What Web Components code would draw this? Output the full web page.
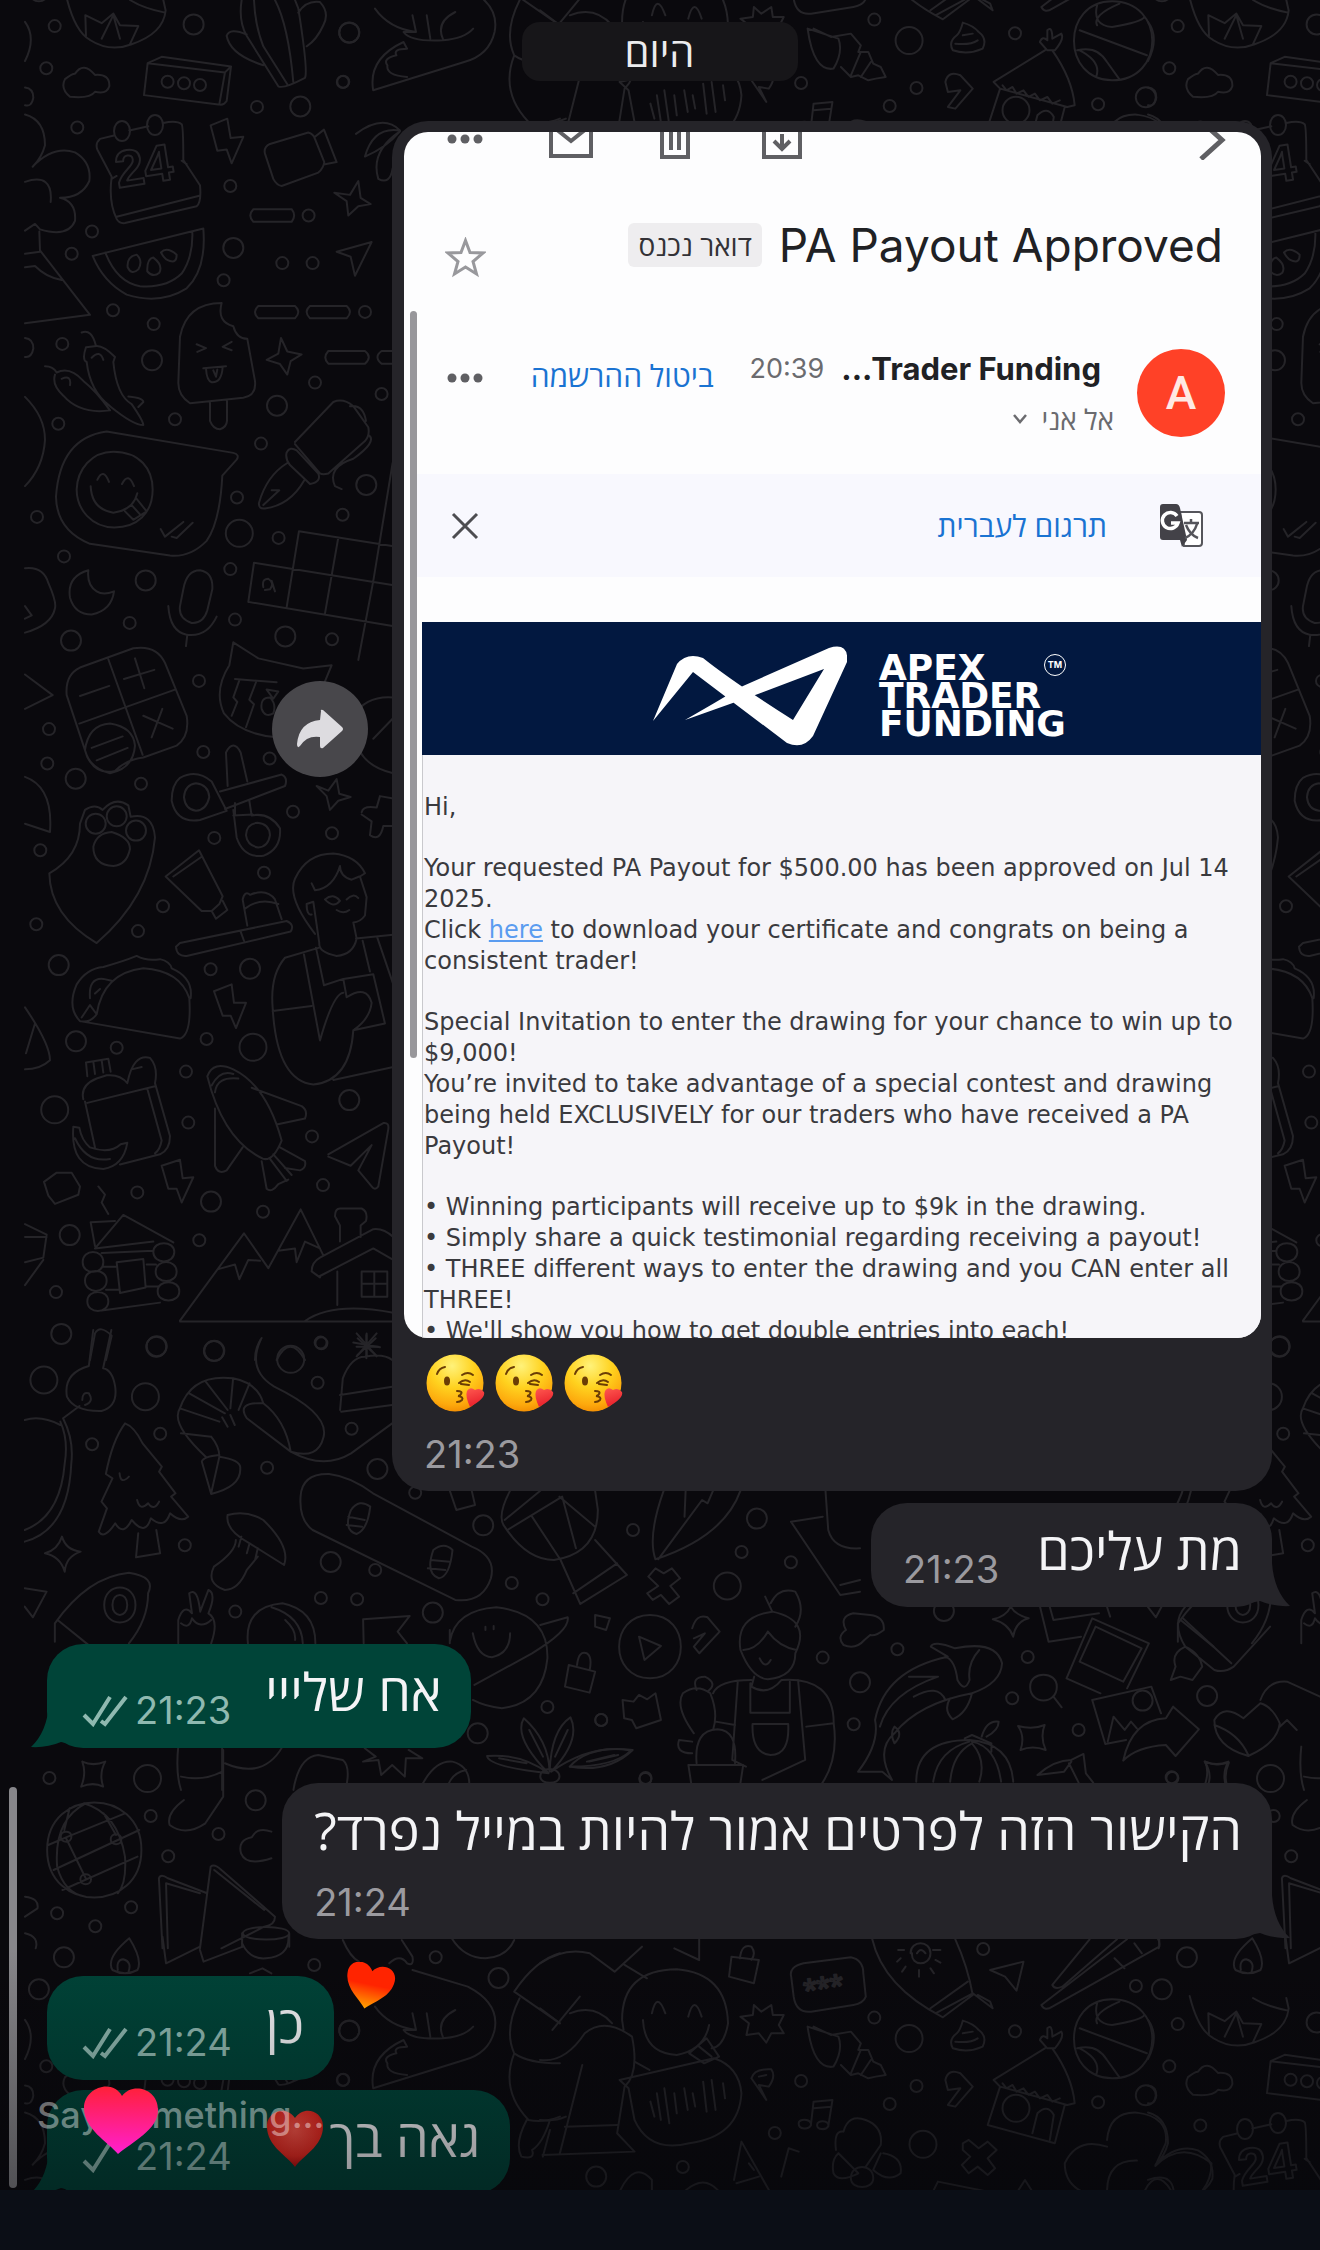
<!DOCTYPE html>
<html lang="he">
<head>
<meta charset="utf-8">
<meta name="viewport" content="width=device-width, initial-scale=1">
<title>Chat</title>
<style>
html, body { margin: 0; height: 100%; background: #0a090d; }
body { font-family: "Open Sans", "Liberation Sans", sans-serif; color: #f4f4f6; }
</style>
</head>
<body>
<chat-screen>
  <date-pill>היום</date-pill>
  <chat-bubble side="in" kind="photo" time="21:23">
    <mail-card slot="media"></mail-card>
    <kiss-emoji></kiss-emoji><kiss-emoji></kiss-emoji><kiss-emoji></kiss-emoji>
  </chat-bubble>
  <chat-bubble side="in" tail time="21:23">מת עליכם</chat-bubble>
  <chat-bubble side="out" tail gap="wide" ticks="2" time="21:23">אח שלייי</chat-bubble>
  <chat-bubble side="in" kind="long" tail gap="wide" time="21:24">הקישור הזה לפרטים אמור להיות במייל נפרד?</chat-bubble>
  <chat-bubble side="out" gap="wide" ticks="2" time="21:24">כן</chat-bubble>
  <chat-bubble side="out" tail ticks="1" time="21:24">גאה בך<heart-emoji></heart-emoji></chat-bubble>
  <live-overlay slot="overlay"></live-overlay>
</chat-screen>

<script>
const define = (name, html, setup) => {
  const tpl = document.createElement('template');
  tpl.innerHTML = html;
  customElements.define(name, class extends HTMLElement {
    constructor() {
      super();
      this.attachShadow({ mode: 'open' }).append(tpl.content.cloneNode(true));
    }
    connectedCallback() { if (setup) setup(this, this.shadowRoot); }
  });
};

/* Wallpaper doodles. Each sheet has its own origin and scale; s/m/l are dots, d is line work. */
const sheets = [
  { x: 0, y: 0, sx: .3333, sy: .4209,
    s: [[164,62],[139,162],[1030,194],[771,254],[232,303],[691,442],[926,512],[276,550],[215,603],[847,625],[938,625],[671,666],[339,737],[461,770],[1095,741],[187,817],[945,909],[1145,936],[175,1007],[525,996],[783,1054],[711,1182],[111,1228],[1028,1223],[836,1278],[192,1322],[691,1352],[389,1480],[705,1472],[996,1519],[503,194],[552,198],[600,202]],
    m: [[581,58],[1048,77],[901,253],[700,589],[456,856],[831,964],[1099,1152],[437,1379],[856,1512],[213,1522]],
    l: [[718,1267]],
    d: `M200-5Q225 75 270 95Q330 125 395 105Q490 80 497 25L490 0M495 30Q430 20 390 0M258 85L256 36L305 55L340 32L360 60L415 62L390 105M305 92L340 36L360 92
    M210 230Q180 210 195 188Q215 175 225 175Q250 145 285 178Q330 175 328 205Q320 225 285 218Q270 235 210 230Z
    M443 150L485 135L693 158L680 240Q670 252 655 248L432 226ZM443 150L675 172L658 248M675 172L693 158
    M725 0Q715 50 740 85L835 205Q850 212 915 185Q925 170 895 20L885 0M762 0Q765 60 790 110L862 200M825 0Q865 60 880 195M740 82Q690 65 680 85Q690 130 790 155M895 30Q920 0 960 5Q990 30 970 60Q950 95 920 110
    M342 322L300 330Q285 340 292 355L335 420Q325 480 350 520Q358 532 375 530L590 490Q605 480 600 440L550 380Q550 300 545 295Q530 285 490 292M388 310L445 300M350 515L598 465M335 425L350 418M545 382L560 390
    M632 298L682 282L692 328L730 325L695 388L680 355L652 358Z
    M795 365Q790 350 810 342L925 315Q940 318 945 330L973 385Q970 400 955 410L845 442Q830 440 820 425ZM945 325L972 308L1010 385L975 390
    M760 497H875Q890 512 875 527H760Q742 512 760 497ZM775 727H885Q905 741 885 756H775Q755 741 775 727ZM930 727H1040Q1060 741 1040 756H930Q910 741 930 727ZM985 834H1095Q1118 848 1095 864H985Q967 850 985 834ZM1200 834H1145Q1120 848 1145 864H1200
    M1003 458L1050 463L1075 430L1082 470L1112 485L1075 490L1045 512L1040 478ZM800 855L835 840L843 803L862 835L905 842L872 858L862 890L840 865Z
    M1010 598L1115 575L1065 655L1052 610Z
    M1068 318Q1150 270 1200 310Q1120 300 1095 372Q1160 350 1200 312Q1110 360 1135 425Q1170 440 1178 400
    M278 608L610 543Q620 640 560 685Q480 725 380 700Q310 670 278 608ZM316 600Q350 670 420 680Q500 685 545 650Q580 610 577 550M383 635Q380 610 410 605Q430 620 415 640Q395 655 383 635M442 645Q440 615 460 612Q490 630 478 648Q460 660 442 645M483 600Q500 585 530 605Q530 625 510 620Q495 618 483 600
    M75 272Q135 285 135 345Q125 375 98 396Q160 345 225 362Q275 385 268 430Q245 470 180 470Q230 480 225 525Q205 565 120 545L105 532L75 548M75 432Q160 410 152 480M118 550L120 595L270 748L75 768M75 603L120 598M75 635L105 632Q140 660 185 665
    M75 208Q100 210 100 232Q95 255 75 250M75 803Q100 805 100 828Q95 850 75 848M75 52Q110 90 75 145M75 943Q135 990 135 1045Q130 1110 75 1155
    M245 790Q275 780 288 822Q310 820 345 848L340 860Q350 940 395 960Q430 1000 430 1010Q400 1010 330 965Q270 930 260 860Q245 855 258 825L290 822M135 870Q160 870 170 885Q210 870 250 905Q290 930 330 975Q240 985 190 940Q155 915 165 890M185 900Q215 890 210 915M275 850Q300 830 310 855M385 942Q430 945 430 955L415 967
    M540 800Q560 720 665 720Q650 765 700 775Q710 805 742 805L765 905Q770 940 730 945L570 958Q535 940 535 910ZM590 818L618 827L592 836M695 812L668 824L695 832M610 875L678 870M618 875Q620 905 635 908Q665 910 668 872M640 880L648 895L652 878M630 955V1000Q640 1020 660 1020Q680 1015 681 1000V952
    M320 1025L700 1076Q720 1080 710 1092L667 1130Q660 1240 620 1285Q570 1325 510 1320L270 1292Q170 1260 168 1180Q180 1040 320 1025ZM340 1073C420 1073 458 1115 458 1163C458 1220 410 1253 343 1253C275 1253 230 1210 230 1163C232 1115 275 1073 340 1073ZM292 1140Q310 1110 327 1145M366 1150Q385 1120 402 1155M272 1155Q275 1210 340 1218Q400 1212 412 1172M375 1215L400 1235L440 1215L410 1185M395 1200L420 1222M482 1257L495 1275L550 1240M515 1275L530 1278L578 1242
    M885 1050L1000 955Q1030 945 1060 965L1105 1015Q1110 1035 1095 1048L985 1125Q960 1130 955 1120L885 1055M860 1075Q870 1060 890 1070L955 1125Q965 1145 930 1150L870 1105Q855 1090 860 1075M862 1100Q800 1130 777 1195Q775 1210 795 1208Q870 1200 912 1142M790 1200L838 1165L815 1165M1050 965Q1090 960 1098 1000M1108 1035Q1130 1050 1060 1090Q980 1110 1005 1155L1025 1162
    M265 1355Q200 1370 210 1420Q225 1460 275 1460Q335 1450 342 1405Q310 1415 290 1405Q260 1390 265 1355Z
    M550 1400Q560 1355 600 1355Q640 1360 637 1400L622 1450Q610 1482 575 1480Q535 1470 540 1440ZM505 1440Q510 1500 560 1508Q620 1515 650 1465M562 1508L558 1535
    M745 1430L762 1337L1200 1393M745 1430L1200 1490M860 1443L897 1262L1200 1300M975 1458L1015 1277M1075 1568L1120 1380L1178 1100M790 1395Q785 1375 805 1375Q825 1385 810 1400L795 1402M815 1380L825 1405
    M75 1350Q130 1345 145 1385Q170 1430 165 1445Q155 1485 75 1503M75 1440L95 1462L75 1470` },
  { x: 0, y: 640, sx: .3333, sy: .4592,
    s: [[597,89],[147,194],[142,269],[610,244],[809,258],[423,313],[879,374],[996,421],[121,458],[643,431],[792,507],[489,580],[109,619],[414,634],[632,717],[620,869],[350,888],[558,940],[565,1051],[936,1081],[412,1203],[969,1187],[789,1245],[598,1307],[168,1420],[962,1530]],
    m: [[227,302],[176,708],[750,716],[228,874],[1048,1002],[633,1223],[209,1296],[184,1511],[470,1538],[643,1548],[287,400],[350,384],[408,415]],
    l: [[164,1023],[759,887]],
    d: `M240 60L400 18Q470 10 495 50L560 165Q570 210 530 230L430 256Q380 260 345 285Q290 295 262 255L200 120Q195 75 240 60ZM325 42L428 250M238 182L525 108M240 122L328 100M372 85L463 65M405 40L433 105M430 165L518 193M487 150L455 212M255 240Q265 185 330 182Q400 190 405 230Q400 280 330 290Q270 280 255 240M275 235L368 210M290 262L383 235
    M700 5L775 40L910 62L995 55L975 90M700 5L688 55Q640 110 672 160Q720 205 830 212M705 85L830 92M718 88L700 125L712 135L695 165M768 92L748 130L762 140L738 190M785 150Q780 125 810 125Q830 140 820 160Q795 170 785 150M800 108L835 112L820 128Z
    M540 300Q590 280 635 308L680 372L600 392Q530 400 515 350Q515 315 540 300M552 342Q555 315 588 312Q625 315 628 342Q620 370 588 372Q555 368 552 342M660 330L845 293Q865 300 855 318L675 368M683 318L678 245Q700 215 722 245L742 308M700 370L710 430Q730 475 790 470Q845 455 840 410Q810 375 755 382L748 350M738 425Q740 400 772 398Q808 400 810 425Q805 450 775 452Q742 448 738 425M700 382L758 380M705 355V380
    M255 370Q285 355 308 370Q345 340 385 360L392 385Q460 375 465 430Q450 560 290 660Q150 600 148 508Q240 470 240 400ZM280 450Q290 420 335 418Q390 430 390 455Q380 490 340 492Q280 490 280 450
    M497 515L597 458L668 558L658 575L635 590L605 590L497 515M520 515L605 472M635 590L648 607L682 588L668 568
    M540 660L860 612Q885 620 872 635L560 688Q530 690 528 668ZM722 635L732 655M742 622L728 565Q735 545 750 555Q800 540 825 565L845 608M735 585Q780 560 835 575
    M945 640Q860 560 885 520Q920 465 1000 465Q1070 470 1095 508L1080 515L1100 560L1095 600Q1080 615 1060 615L1070 650Q1060 685 1010 688Q955 680 958 660L940 570M935 530L945 545Q1000 540 1020 492Q1020 515 1055 522L1078 515M975 565Q1000 550 1020 568Q1000 585 975 565M1040 565Q1060 550 1075 562M920 575L940 570M920 575Q920 600 935 598M1010 588Q1030 598 1048 588
    M958 670L855 692Q810 730 818 800Q830 960 940 968Q1050 960 1060 850L1155 835L1120 728L1030 738L972 752L948 670M912 685L960 872Q1000 770 1030 768M818 808L935 797M1068 650L1180 642M1088 655L1110 722M1132 648L1180 750M1030 738L1040 778Q1100 750 1115 790Q1110 825 1060 850M1000 958L1180 930
    M240 830Q200 800 230 750Q260 715 310 712Q370 700 410 688Q440 700 480 695Q510 700 515 715Q580 735 572 780M240 830L540 868Q575 860 568 780Q540 720 430 715Q310 725 290 815Q270 835 240 830M270 780Q265 735 310 738L335 742M285 770L300 760M245 822L270 795L290 815
    M642 765L695 750L702 790L738 790L708 845L692 818L668 818ZM485 1145L540 1132L548 1172L580 1170L545 1225L530 1195L505 1195Z
    M250 1000Q240 970 290 955L320 948Q360 945 382 965Q400 900 450 910Q475 930 465 965L510 1080Q510 1110 480 1120L360 1142M262 1008L465 972M255 1005L285 1105M443 980L485 1090Q480 1110 465 1118M262 950L258 920L325 912L332 940M280 918L285 945M305 915L310 942M395 935L425 930M220 1060Q210 1150 310 1152Q370 1145 382 1095L362 1098Q330 1120 270 1105Q245 1090 238 1062ZM225 1085Q260 1140 330 1130
    M622 950Q640 915 700 935Q800 970 845 1090Q820 1135 790 1130Q670 1090 622 950M645 985Q650 950 715 955M635 970Q660 935 700 945M755 975L905 1015Q925 1025 915 1042L830 1055M645 1020V1145Q655 1165 680 1155L728 1105M785 1135L800 1195Q815 1205 835 1185L865 1175M840 1105L915 1135Q920 1150 900 1155L855 1150M810 1130L860 1178M820 1120L875 1165
    M985 1120L1150 1052Q1168 1050 1165 1065L1135 1190Q1125 1200 1115 1190L1075 1155L1115 1100L1052 1145L985 1125
    M132 1180L170 1160L215 1160L240 1190L235 1208L165 1228L145 1210ZM295 1190L315 1208L305 1225L325 1250
    M285 1325L370 1252L520 1312M285 1325L460 1310M285 1320L272 1268L345 1265M305 1335L460 1330M305 1460L480 1443M310 1365H350M440 1360H468M318 1415H355M440 1408H475M350 1355L430 1348L437 1410L360 1422ZM248 1355C248 1325 310 1325 310 1355C310 1383 248 1383 248 1355M255 1395C255 1367 320 1367 320 1395C320 1425 255 1425 255 1395M262 1440C262 1413 325 1413 325 1440C325 1468 262 1468 262 1440M460 1333C460 1307 523 1307 523 1333C523 1360 460 1360 460 1333M467 1375C467 1348 530 1348 530 1375C530 1403 467 1403 467 1375M473 1418C473 1392 538 1392 538 1418C538 1445 473 1445 473 1418
    M540 1482L732 1292L805 1368L902 1240L970 1340M540 1484H1180M655 1370L705 1360L718 1392L745 1350L780 1352M835 1330L885 1325L890 1355L915 1310L960 1325M935 1375Q935 1355 960 1345L1120 1283Q1150 1280 1180 1300M960 1385L1120 1325L1180 1350M935 1375L960 1388M1012 1375V1448M1020 1310V1275L1005 1255Q1005 1238 1020 1238H1085Q1105 1245 1098 1265L1082 1275V1300M1085 1375H1162V1430H1085ZM1123 1375V1430M1085 1402H1162M915 1483Q1000 1440 1180 1465
    M75 75L158 120L75 150M75 298Q160 320 150 418L75 400M75 800Q150 880 150 915Q120 935 75 935M105 835L78 900M75 1272L140 1295L130 1345L75 1355M130 1350L75 1405M75 1300H140
    M950 318L985 328L1010 303L1018 335L1052 342L1015 350L990 370L980 340ZM1085 375Q1090 360 1130 365L1140 340L1180 345M1085 380L1115 395L1110 425Q1140 440 1150 405L1180 405M1180 125Q1100 120 1060 165Q1050 270 1180 290M1120 215L1180 170
    M270 1568L285 1510Q300 1490 335 1515L318 1568M765 1568Q765 1540 785 1520M830 1568Q870 1510 915 1568M1060 1530L1140 1540M1100 1510V1560M1070 1510L1130 1560M1130 1510L1070 1560` },
  { x: 0, y: 1330, sx: .5485, sy: .3333,
    s: [[586,40],[579,158],[641,296],[292,311],[168,343],[487,413],[337,646],[684,720],[757,488],[585,804],[651,808],[429,845],[933,759],[989,808],[1154,600],[1352,666],[1442,697],[998,1131],[1096,1170],[90,1344],[1177,1344]],
    m: [[285,50],[390,63],[688,417],[603,696],[881,586],[789,848],[1380,566],[871,1210]],
    l: [[530,88],[80,150],[265,200],[1326,768],[269,1346]],
    d: `M170 0L162 108Q115 130 122 200Q135 245 185 243Q215 230 210 170Q205 120 188 115L203 0M150 210Q150 185 162 190Q172 215 155 225M145 228L115 265Q135 330 130 400Q125 600 45 635M110 275Q125 330 118 400Q110 560 45 600M45 270Q75 255 110 285
    M228 280Q245 290 260 340L295 410L290 425L320 490L312 500L343 560Q330 580 310 550Q300 600 275 565Q265 620 240 570Q225 620 210 580Q190 630 180 605L195 535L185 515L205 445L193 432Q205 330 228 280ZM252 610L248 682L292 670L285 600M218 430Q220 465 235 440M250 510Q255 545 270 520Q280 545 290 515
    M375 380Q310 280 328 235Q350 130 425 145Q470 160 480 220Q520 270 530 365L450 265Q430 215 480 220M385 320Q400 350 400 380Q440 390 438 415Q440 470 385 492L368 395Q370 380 400 375M328 235L400 275M345 190L410 250M375 155L415 240M425 145L420 235M455 160L435 240M330 310L385 320M400 380L385 490M405 262L415 290M420 255L428 285
    M475 30Q450 120 500 170Q600 250 590 320Q580 390 530 365M530 365Q590 420 640 370L715 280M620 240L625 145Q640 80 665 80Q700 70 715 90M620 195L715 170M622 245L715 225M650 50H690M668 15V85M652 25L685 75M685 25L652 75
    M548 500Q550 430 600 432Q640 440 680 490L860 650Q905 680 895 745Q880 820 830 810L570 600Q545 570 548 500M640 540Q655 505 675 530Q670 600 650 612Q625 600 640 540M790 660Q810 635 825 660Q820 740 800 745Q775 730 790 660M635 560L665 570M632 585L660 590M785 690L820 695M780 715L812 720
    M415 555Q450 540 480 570Q530 650 518 705L455 640Q410 600 415 555M430 630Q430 665 390 710Q375 760 410 780Q435 780 450 720L470 680M440 620L435 650M455 640L450 670M470 655L465 690
    M82 670Q105 660 113 620Q120 660 147 665Q120 680 118 725Q110 680 82 670ZM45 775L85 785L60 862L45 830
    M270 790Q285 740 235 728Q160 740 100 880L100 935M105 870L165 950M190 825C190 755 247 755 247 825C247 895 190 895 190 825M205 825C205 785 232 785 232 825C232 865 205 865 205 825M270 790Q270 870 235 940
    M325 940V870Q335 820 350 850L345 790Q360 770 365 845L380 780Q395 790 380 850Q400 870 385 940M330 880Q345 900 350 865Q365 900 385 870
    M452 940Q445 830 515 820Q575 840 575 940M495 832Q550 860 552 940M520 870Q540 900 538 930M663 940L662 868L747 858L725 905L742 940
    M820 935Q830 840 905 832Q1000 850 998 985Q990 1120 915 1135Q885 1130 862 1110M820 900L820 940M985 885L1035 862Q1040 900 970 970L865 1065M862 910Q870 980 897 982Q930 970 930 910M885 890V900M900 888V898
    M1085 855L1112 865L1105 900L1085 890ZM1195 715L1210 730L1225 715L1240 745L1222 768L1238 800L1220 822L1205 795L1190 810L1180 790L1200 768L1182 740ZM1185 855C1260 855 1260 1045 1185 1045C1110 1045 1110 855 1185 855ZM1165 920L1205 948L1175 990ZM1262 895Q1270 850 1290 862L1312 905L1275 970L1265 950L1285 910L1265 925M1037 1005L1085 1025L1075 1088L1030 1070ZM1052 1005Q1055 960 1070 970Q1080 980 1075 1020
    M820 482L832 540L866 525L860 482M930 482Q905 560 920 590Q960 690 1010 690Q1090 670 1090 540L1085 482M920 570L985 482M925 600L1025 500L1050 655M970 560L1020 685M1020 500L1085 590M1085 630L1143 735L1058 822L1022 690M1045 790L1125 700
    M1210 482Q1180 620 1195 688Q1320 620 1350 482M1200 688L1280 510L1290 520L1300 482M1250 482L1248 560M1500 560L1442 575L1532 795L1568 785M1505 482L1510 600Q1520 660 1568 655M1532 765L1568 750
    M1395 800L1408 845Q1340 860 1350 960Q1370 1045 1400 1048Q1450 1040 1450 970Q1480 870 1408 845M1405 820Q1420 770 1450 785Q1470 840 1450 890M1400 905Q1380 960 1355 960M1400 905Q1420 950 1452 960M1385 985Q1395 1020 1405 990M1375 1040L1370 1070Q1400 1100 1425 1050M1370 1050Q1310 1050 1300 1090M1425 1050Q1520 1040 1520 1180Q1530 1300 1490 1380M1368 1060V1148H1440V1055M1345 1055L1335 1290L1360 1310M1455 1050L1468 1290L1390 1350M1372 1182H1437Q1440 1275 1405 1275Q1370 1270 1372 1182M1305 1175L1340 1185M1470 1190L1520 1180M1265 1210Q1230 1130 1245 1090Q1270 1060 1295 1090Q1310 1150 1300 1200M1270 1300Q1265 1200 1308 1198Q1345 1200 1340 1300M1255 1305H1355L1348 1380H1262L1255 1305M1270 1080Q1260 1040 1285 1040Q1310 1060 1290 1085M1262 1270Q1230 1270 1238 1230L1262 1235
    M1135 1110L1155 1115L1165 1095L1180 1108L1195 1090L1205 1170L1160 1195L1152 1170L1138 1165Z
    M1000 1330Q890 1310 888 1278Q950 1270 1000 1330Q935 1220 955 1165Q1000 1230 1002 1325Q1005 1200 1040 1162Q1060 1230 1005 1325Q1080 1240 1150 1262Q1120 1310 1040 1310M985 1340C985 1310 1020 1310 1020 1340C1020 1365 985 1365 985 1340M910 1285L960 1300M965 1200L990 1280M1035 1200L1012 1280M1120 1275L1070 1295
    M665 1255L685 1280L662 1295L690 1290L695 1335L715 1305L738 1340L740 1285L770 1285L745 1260
    M325 1250Q320 1330 330 1380M405 1250V1380M330 1340Q370 1355 405 1325M410 1300Q480 1350 515 1250M535 1380Q545 1280 580 1275L625 1290Q640 1310 630 1380M765 1380Q790 1290 825 1295Q860 1310 855 1380M815 1380Q820 1330 850 1320M150 1295Q170 1310 192 1295Q180 1330 188 1370Q170 1355 148 1370Q158 1330 150 1295` },
  { x: 560, y: 1480, sx: .4847, sy: .3333,
    s: [[696,508],[542,533],[606,733],[933,655],[965,531],[1070,750],[176,897],[1262,892],[85,720]],
    m: [[619,607],[792,393],[1202,662],[1335,648]],
    l: [],
    d: `M893 418Q920 410 930 380Q940 405 967 415Q940 425 935 470Q925 430 893 418ZM585 495Q570 470 590 450Q575 410 605 400L640 405Q670 410 668 450Q650 470 640 465L628 480Q610 510 585 495Z
    M615 875Q660 790 650 720Q670 570 800 530L765 500Q770 480 815 505Q900 480 912 550Q910 610 850 640Q840 700 810 718Q790 690 805 655M850 640Q740 670 690 760Q650 810 685 900L665 875H615M720 590H780Q680 640 660 740M730 650Q780 610 795 660M690 790Q680 760 690 740Q710 760 690 790M865 510Q840 550 845 600Q835 640 820 600Q815 540 795 530
    M735 905Q735 780 845 780Q930 790 935 905M770 905Q780 810 845 785M805 905Q810 820 850 790Q880 840 865 905M850 785Q900 800 910 905M835 775L850 765L890 790V815M870 770Q880 720 905 725Q905 750 880 770
    M970 620C970 572 1025 572 1025 620C1025 675 970 675 970 620M1018 650L1035 682M945 738Q975 750 1000 735Q990 770 1002 810Q975 795 950 810Q960 770 945 738Z
    M990 378L1008 485L1075 470M1010 378L1018 420L1112 400M1128 378L1135 410M1098 415L1215 490L1170 625M1098 415L1045 595L1115 640M1105 440L1200 505L1162 605L1072 545ZM1098 660L1220 620L1240 700M1098 660L1125 792L1168 780M1130 785L1142 710L1165 750L1178 725L1190 745M1162 842Q1180 720 1250 715L1265 680L1318 748L1270 828L1250 795Q1190 800 1162 842
    M1290 380Q1260 430 1290 500L1350 570Q1370 580 1390 560L1465 440M1285 415L1385 550M1290 500Q1260 520 1270 560L1260 600L1280 590L1305 600L1325 560Q1320 520 1290 500M1410 715Q1370 670 1350 720Q1350 800 1420 828Q1480 790 1485 730Q1470 680 1445 670ZM1350 735Q1400 760 1420 825M1445 660Q1460 600 1500 605L1568 650M1485 740L1500 720L1520 750
    M985 885Q1020 840 1055 840L1080 822L1085 880L1100 908M985 885L1040 875L1055 845M1050 850L1070 908M1330 845Q1355 860 1380 848Q1370 880 1375 910M1330 845Q1345 880 1338 910
    M20 860Q60 795 150 810Q100 880 20 860M60 845L120 825` },
  { x: 0, y: 1600, sx: .3571, sy: .3333,
    s: [[422,648],[612,702],[471,769],[367,922],[160,940],[267,979]],
    m: [[716,601]],
    l: [],
    d: `M132 750C132 560 396 560 396 750C396 940 132 940 132 750M240 610Q150 660 160 800Q180 880 240 890M235 610Q330 640 350 770Q355 850 330 880M135 735L190 710L350 640M150 810L330 720L390 690M175 870L385 770M185 715L240 835M170 710C170 690 200 690 200 710C200 730 170 730 170 710M310 718C310 698 340 698 340 718C340 738 310 738 310 718M225 838C225 818 255 818 255 838C255 858 225 858 225 838M180 690L195 625M325 705L290 640
    M515 600Q465 640 475 675Q520 710 575 670L625 590V450M675 760Q665 720 705 712Q720 680 760 695M675 760Q690 800 760 775
    M455 1045L445 835Q450 820 470 835L580 880M470 1045L465 850L560 880M560 1045L590 800Q600 790 620 810L770 950Q770 975 740 980L620 1045M600 810L740 930
    M680 1000C680 975 810 975 810 1000C810 1025 680 1025 680 1000M678 1000V1040M810 1000V1040M70 890Q110 895 105 925L70 950M70 1000Q110 1010 100 1045` },
  { x: 0, y: 1930, sx: .3571, sy: .3333,
    s: [[880,105],[1220,82],[960,450]],
    m: [[179,82],[109,178],[1396,144],[978,302]],
    l: [],
    d: `M362 25Q400 90 385 120Q350 140 315 120Q295 85 362 25M330 120Q325 90 345 88Q370 95 360 125M455 20L465 100L560 50M560 60L570 95L680 50M678 40Q700 90 745 85Q810 80 808 20M960 30Q980 80 1005 95M1125 30L1155 80Q1160 110 1140 100Q1120 70 1090 100M1155 120L1310 170Q1400 220 1385 300Q1370 370 1300 390L1045 475Q1030 380 1130 330M1050 230Q1090 290 1165 300L1130 300Q1150 330 1240 325Q1300 320 1325 290M1155 250L1165 300M1195 250L1205 320M1240 320Q1220 270 1275 240M1130 330L1140 350Q1100 350 1110 370Q1070 380 1085 400Q1080 430 1140 435M1265 25Q1300 85 1360 85Q1420 80 1440 30
    M1568 70Q1500 90 1440 185L1568 280M1455 205Q1410 300 1440 370Q1480 400 1568 400M1440 370Q1400 480 1480 570Q1520 580 1568 560M1475 570Q1440 640 1460 680Q1500 690 1490 660Q1520 640 1540 570M700 130L735 115L760 130M1520 680L1540 600` },
  { x: 540, y: 1740, sx: .4974, sy: .3333,
    s: [[891,627],[672,833],[955,874],[1198,738],[525,1023],[757,1038],[703,1092],[1122,1087],[472,1179],[287,1281]],
    m: [[113,1310],[1218,1066]],
    l: [[742,896],[770,1213],[957,1105]],
    d: `M0 670Q50 620 100 640L150 695L205 620M170 675L215 715M165 840Q165 690 275 688Q375 700 378 850Q370 920 345 925M165 840L168 870M225 820Q235 750 252 820M298 830Q310 760 325 830M207 840Q210 940 275 945Q330 930 340 855M300 940L330 970L360 950L335 895ZM320 920L345 950M80 770L25 870M0 805L40 850M60 820Q110 790 145 850M0 960Q50 970 90 880Q130 830 185 890Q200 1000 170 1040L155 1180L190 1235L5 1245M85 975L40 1240M190 965L220 990M50 1160L155 1155M0 1140Q30 1145 52 1130
    M160 1020L350 955Q400 980 405 1060Q400 1190 300 1210Q220 1240 190 1140L178 1045ZM222 1085L230 1130M235 1060L243 1140M250 1045L260 1150M270 1060L275 1120M290 1045L297 1110M307 1060L312 1100M328 1025L335 1115M345 1020L353 1110M368 1030L372 1075
    M385 650L440 660L430 730L380 710ZM402 655Q405 610 425 620Q435 640 425 660M505 710Q500 680 530 670L625 652Q650 660 650 700L655 770Q650 790 630 795L545 815Q515 820 510 770Z
    M430 795L445 815L465 795L468 825L490 825L480 855L490 880L465 880L455 908L440 880L415 885L420 850L403 830L428 825Z
    M668 598Q690 740 810 832L870 765Q860 680 835 598M785 805L860 725M795 820L870 760L910 805L905 785L880 765M745 640C745 600 785 600 785 640C785 680 745 680 748 640M758 640Q765 620 775 640M720 630H732M790 630H805M735 680L728 695M762 690V710M785 685L792 700M725 655L718 665M795 660L805 668
    M270 625L320 660V598M905 690L972 665L958 752L935 710ZM1105 598L1030 735Q1035 750 1050 740L1160 598M1180 598L1008 795Q1015 815 1030 800L1245 620V598M1155 655L1175 685M1195 610L1210 640
    M1150 778C1258 778 1258 1015 1150 1015C1048 1015 1048 778 1150 778ZM1120 790Q1110 850 1150 855Q1210 840 1215 825M1085 865L1220 940M1080 925Q1120 910 1140 960L1165 1012M1085 925Q1130 960 1118 1005M1165 785Q1110 820 1120 850
    M538 860Q550 990 590 980Q610 930 600 890ZM550 860L585 885L625 875L645 910L640 930L660 930L670 965L685 975L695 1005L675 1010L660 1015L640 1000L625 1005L605 975M645 930L625 1000M665 960L645 1005
    M850 842Q845 870 838 880Q820 900 830 925Q860 940 890 920Q900 890 882 870Q870 850 850 842M835 905Q865 910 880 895M850 880L870 875
    M1020 925L1005 900Q1010 880 1020 895V865Q1030 850 1030 890L1048 875Q1055 890 1035 925ZM1015 925L912 1020L925 1040L1060 1095L1075 1090Q1070 1010 1030 925M925 1040L900 1155L1035 1210L1055 1095M990 1180L1000 1120Q1020 1090 1033 1125L1025 1200M930 1030L938 1045L950 1035L958 1055L972 1045L982 1065L995 1055L1005 1075L1020 1065L1030 1085L1045 1075
    M425 1015Q430 985 465 988Q475 1010 460 1040L440 1035L455 1080L425 1015M440 1010L455 1005M815 1020Q820 985 845 1000L870 1040L835 1100L820 1095L845 1045L820 1050Z
    M545 1150L550 1085L588 1080L580 1155M550 1105L585 1100M520 1150C520 1135 545 1135 545 1155C540 1170 520 1170 520 1150M557 1155C557 1140 580 1140 580 1158C575 1172 557 1170 557 1155
    M850 1210L862 1200L882 1225L900 1205L918 1230L900 1255L915 1285L900 1305L880 1280L862 1300L848 1275L865 1250L850 1230Z
    M595 1230Q590 1170 610 1175Q620 1120 655 1140Q690 1160 685 1215L655 1280M600 1240L640 1300Q600 1330 590 1300Q585 1260 600 1240M690 1240Q730 1250 725 1300Q700 1330 670 1290L685 1240M625 1315C625 1270 670 1270 670 1315C670 1350 625 1350 625 1315
    M1140 1200Q1145 1115 1200 1118Q1265 1130 1258 1210L1237 1278Q1290 1200 1350 1270Q1350 1320 1330 1355M1140 1220Q1080 1190 1055 1270Q1055 1330 1090 1355M1140 1355Q1140 1260 1200 1262M1215 1355Q1240 1280 1270 1355
    M390 1320L405 1205L462 1355M395 1330L440 1310M420 1270L430 1290M485 1310L500 1225L520 1235M160 1355Q190 1260 225 1320L225 1355M290 1355Q330 1300 360 1355M790 1355L800 1325L900 1355M960 1355L975 1320L990 1355` }
];

const doodles = sheets.map(k => {
  const dots = (list = [], r) => list.map(([a, b]) =>
    `<circle cx="${(k.x + a * k.sx).toFixed(1)}" cy="${(k.y + b * k.sy).toFixed(1)}" r="${r}"/>`).join('');
  return dots(k.s, 6) + dots(k.m, 10) + dots(k.l, 13.5) +
    `<path transform="translate(${k.x} ${k.y}) scale(${k.sx} ${k.sy})" vector-effect="non-scaling-stroke" d="${k.d}"/>`;
}).join('');

define('chat-wallpaper', `
<style>
:host { display: block; overflow: hidden; }
svg { display: block; }
</style>
<svg width="100%" height="2250" aria-hidden="true" fill="none" stroke="#252428" stroke-width="2" stroke-linejoin="round" stroke-linecap="round">
  <defs>
    <clipPath id="edge"><rect x="24" y="0" width="4000" height="2250"/></clipPath>
    <g id="tile">${doodles}
      <ellipse cx="122" cy="131" rx="8" ry="10"/><ellipse cx="155" cy="125" rx="8" ry="10"/>
      <text x="118" y="188" font-family="Liberation Sans" font-weight="700" font-size="52" transform="rotate(-9 118 188)" aria-hidden="true">24</text>
      <text x="806" y="2003" font-family="Liberation Sans" font-size="34" transform="rotate(-9 806 2003)">***</text>
    </g>
  </defs>
  <g clip-path="url(#edge)">
    <use href="#tile"/><use href="#tile" x="1123"/>
    <use href="#tile" y="1998"/><use href="#tile" y="-1998"/>
    <use href="#tile" x="1123" y="1998"/><use href="#tile" x="1123" y="-1998"/>
  </g>
</svg>`);

define('chat-screen', `
<style>
:host { display: flex; flex-direction: column; height: 100vh; background: #0a090d; }
main { position: relative; flex: 1; min-height: 0; overflow: hidden; }
chat-wallpaper { position: absolute; inset: 0; }
.thread { position: relative; display: flex; flex-direction: column; direction: rtl; padding: 22px 48px 0 47px; }
.shade { position: absolute; inset: auto 0 0; height: 240px; background: linear-gradient(transparent, rgba(5,6,10,.42)); }
.bar { position: absolute; left: 9px; bottom: 2px; width: 8px; height: 401px; border-radius: 4px; background: #87868a; }
footer { height: 60px; background: #0b0e16; }
</style>
<main>
  <chat-wallpaper></chat-wallpaper>
  <div class="thread"><slot></slot></div>
  <div class="bar"></div>
  <div class="shade"></div>
  <slot name="overlay"></slot>
</main>
<footer></footer>`);

define('date-pill', `
<style>
:host { display: block; align-self: center; box-sizing: border-box; width: 276px; margin-bottom: 40px; border-radius: 18px; background: #171619; text-align: center; font-size: 40px; line-height: 59px; font-weight: 500; color: #ececee; }
</style><slot></slot>`);

const tick = '<path d="M2 21l9 9L28 3"/>';
define('chat-bubble', `
<style>
:host { position: relative; display: flex; box-sizing: border-box; min-height: 104px; margin-bottom: 12px; padding: 17px 30px 0 32px; gap: 38px; border-radius: 36px; background: var(--fill); color: #f4f4f6; font-size: 52px; line-height: 60px; --fill: #252429; --meta: #9b9a9f; }
:host([side="in"]) { align-self: flex-start; }
:host([side="out"]) { align-self: flex-end; --fill: #004438; --meta: #8fb9b0; padding-left: 35px; gap: 34px; margin-bottom: 10px; }
:host([gap="wide"]) { margin-top: 25px; }
:host([kind="long"]) { flex-direction: column; gap: 22px; min-height: 156px; }
:host([kind="photo"]) { flex-direction: column; gap: 0; width: min(880px, 100%); padding: 11px 11px 17px 12px; border-radius: 36px; }
.text { white-space: nowrap; display: flex; align-items: center; align-self: flex-start; height: 60px; }
.meta { display: flex; direction: ltr; align-self: flex-end; align-items: center; gap: 7px; margin-bottom: 15px; height: 40px; font: 38px/40px Inter, sans-serif; color: var(--meta); }
:host(:not([kind])) .meta { align-self: flex-start; margin-top: 29px; }
:host([kind="photo"]) .text { direction: ltr; align-self: flex-end; gap: 11px; height: 90px; padding-left: 22px; }
:host([kind="photo"]) .meta { margin: 6px 20px 0 20px; }
.tick { width: 46px; height: 33px; fill: none; stroke: currentColor; stroke-width: 4; }
.tail { position: absolute; bottom: 0; width: 40px; height: 44px; fill: var(--fill); }
:host([side="in"]) .tail { right: -18px; }
:host([side="out"]) .tail { left: -16px; transform: scaleX(-1); }
:host(:not([tail])) .tail, :host(:not([ticks])) .tick { display: none; }
:host([ticks="1"]) .second { display: none; }
</style>
<slot name="media"></slot>
<span class="text"><slot></slot></span>
<span class="meta">
  <svg class="tick" viewBox="0 0 46 33" aria-hidden="true">${tick}<path class="second" d="M19 27l4 3L44 3"/></svg>
  <time></time>
</span>
<svg class="tail" viewBox="0 0 40 44" aria-hidden="true"><path d="M0 0H22Q24 28 40 43Q24 44 10 38L0 40Z"/></svg>`,
(host, root) => { root.querySelector('time').textContent = host.getAttribute('time'); });

define('kiss-emoji', `
<style>:host { display: block; width: 58px; height: 60px; } svg { display: block; width: 60px; height: 60px; }</style>
<svg viewBox="0 0 60 60" role="img" aria-label="😘">
  <defs>
    <radialGradient id="f" cx=".45" cy=".2" r=".85"><stop offset="0" stop-color="#fff27a"/><stop offset=".45" stop-color="#ffd21f"/><stop offset=".8" stop-color="#fda90d"/><stop offset="1" stop-color="#f08700"/></radialGradient>
    <linearGradient id="h" x1="0" y1="0" x2=".3" y2="1"><stop offset="0" stop-color="#ff5a50"/><stop offset="1" stop-color="#e8202c"/></linearGradient>
  </defs>
  <circle cx="29" cy="30" r="28.5" fill="url(#f)"/>
  <ellipse cx="21" cy="28" rx="3" ry="4.5" fill="#6b3d05"/>
  <g fill="none" stroke="#6b3d05" stroke-width="2" stroke-linecap="round">
    <path d="M11 21Q13 15 19 14M36 22Q42 18 47 22M33 30Q39 25 44 29M35 31L43 32"/>
    <path d="M31 38Q37 38 35 41Q34 43 32 43Q38 44 36 47Q34 49 31 49"/>
  </g>
  <path d="M44 54Q39 43 41 38Q44 33 49 37Q54 34 58 39Q60 45 44 54Z" fill="url(#h)"/>
</svg>`);

define('heart-emoji', `
<style>:host { display: block; width: 58px; height: 58px; margin-right: 6px; } svg { display: block; width: 58px; height: 60px; }</style>
<svg viewBox="0 0 58 60" role="img" aria-label="❤️">
  <defs><radialGradient id="r" cx=".5" cy=".35" r=".65"><stop offset="0" stop-color="#ff5548"/><stop offset=".7" stop-color="#ee2a20"/><stop offset="1" stop-color="#b80d0d"/></radialGradient></defs>
  <path d="M29 59C22 48 0 38 1 17C2 3 20-3 29 10C38-3 56 3 57 17C58 38 36 48 29 59Z" fill="url(#r)"/>
</svg>`);

define('mail-card', `
<style>
:host { display: block; height: 1206px; overflow: hidden; position: relative; border-radius: 24px; background: #fdfdfe; color: #202124; direction: rtl; font-family: "Open Sans", sans-serif; line-height: 40px; }
button, a { all: unset; cursor: pointer; }
svg { display: block; }
.tools { display: flex; direction: ltr; height: 44px; margin-top: -16px; padding: 0 34px 0 43px; align-items: flex-end; color: #5f5f63; }
.tools button + button { margin-left: 65px; }
.tools button:last-child { margin-left: auto; }
.title { display: flex; align-items: center; height: 90px; margin-top: 40px; padding: 0 38px 0 41px; gap: 17px; }
h1 { margin: 0; direction: ltr; font: 400 46px/60px Inter, sans-serif; }
.chip { border-radius: 6px; background: #eeedef; padding: 0 10px; font-size: 28px; line-height: 44px; font-weight: 500; color: #333236; }
.star { margin-right: auto; margin-top: 24px; }
.from { display: flex; height: 90px; margin-top: 59px; padding: 0 36px 0 43px; }
.avatar { width: 88px; height: 88px; border-radius: 50%; background: #ff4127; color: #ffe9e4; text-align: center; font: 500 46px/88px Roboto, sans-serif; }
.who { margin-right: 23px; }
.name { display: flex; gap: 17px; padding-right: 13px; align-items: center; height: 40px; direction: rtl; }
.name b { direction: ltr; font: 700 31px/40px Inter, sans-serif; }
.name time { font: 27px/40px Inter, sans-serif; color: #6b6b6f; }
.to { display: flex; align-items: center; gap: 14px; height: 60px; font-size: 28px; color: #6b6b6f; }
.blue { display: block; color: #1a73d2; font-size: 30px; line-height: 40px; }
.unsub { margin-right: 36px; margin-top: 7px; }
.from .dots { display: block; height: 10px; margin: 24px auto 0 0; }
.translate { display: flex; align-items: center; height: 103px; margin: 35px 0 0 13px; padding: 0 58px 0 34px; background: #f8f8fe; }
.translate a { margin-right: 53px; }
.translate button { margin-right: auto; }
.banner { display: flex; direction: ltr; align-items: center; box-sizing: border-box; height: 133px; margin: 45px 0 0 18px; padding: 15px 0 0 231px; gap: 32px; background: #021840; color: #fff; }
.brand { display: flex; align-items: flex-start; font: 700 36px/28px "DejaVu Sans", sans-serif; }
.brand sup { align-self: flex-start; box-sizing: border-box; width: 22px; height: 22px; margin-left: -22px; border: 1px solid #fff; border-radius: 50%; text-align: center; font: 700 9px/20px Inter, sans-serif; }
.body { direction: ltr; margin-left: 18px; border-left: 1px solid #c9c9cd; padding: 37px 0 0 1px; height: 700px; background: #f6f5f9; color: #3a3a3e; font: 24px/31px "DejaVu Sans", sans-serif; white-space: nowrap; }
.body p, .body ul { margin: 0 0 30px; padding: 0; list-style: none; }
.body a { color: #5a9cf0; text-decoration: underline; }
.scroll { position: absolute; left: 6px; top: 179px; width: 7px; height: 747px; border-radius: 4px; background: #98979b; }
</style>
<div class="tools">
  <button aria-label="More"><svg width="36" height="42" fill="currentColor"><circle cx="5" cy="21" r="4.5"/><circle cx="18" cy="21" r="4.5"/><circle cx="31" cy="21" r="4.5"/></svg></button>
  <button aria-label="Mark unread"><svg width="46" height="41" fill="none" stroke="currentColor" stroke-width="4"><path d="M3 4H43V37H3ZM3 6L23 22L43 6"/></svg></button>
  <button aria-label="Delete"><svg width="32" height="44" fill="none" stroke="currentColor" stroke-width="4"><path d="M3 8V41H29V8M12 8V34M20 8V34"/></svg></button>
  <button aria-label="Archive"><svg width="46" height="44" viewBox="-6 0 46 44" fill="none" stroke="currentColor" stroke-width="4"><path d="M2 8V41H38V8M20 18V32M12 25L20 33L28 25"/></svg></button>
  <button aria-label="Back"><svg width="30" height="44" fill="none" stroke="currentColor" stroke-width="5"><path d="M4 5L25 24L4 43"/></svg></button>
</div>
<div class="title">
  <h1>PA Payout Approved</h1>
  <span class="chip">דואר נכנס</span>
  <button class="star" aria-label="Star"><svg width="41" height="41" viewBox="0 0 41 41" fill="none" stroke="#98989c" stroke-width="3"><path d="M20.500 3.500L25 15.500L38 16L28 24.500L31.500 37L20.500 30L9.500 37L13 24.500L3 16L16 15.500Z"/></svg></button>
</div>
<div class="from">
  <div class="avatar">A</div>
  <div class="who">
    <div class="name"><b>...Trader Funding</b><time>20:39</time></div>
    <div class="to"><span>אל אני</span><svg width="14" height="10" fill="none" stroke="currentColor" stroke-width="2.500"><path d="M1 1L7 8L13 1"/></svg></div>
  </div>
  <div class="unsub"><a class="blue" href="#unsubscribe">ביטול ההרשמה</a></div>
  <button class="dots" aria-label="Options"><svg width="36" height="10" fill="#5f5f63"><circle cx="5" cy="5" r="4.500"/><circle cx="18" cy="5" r="4.500"/><circle cx="31" cy="5" r="4.500"/></svg></button>
</div>
<div class="translate">
  <svg width="43" height="44" viewBox="0 0 43 44" aria-hidden="true"><path d="M20 8H39Q42 8 42 11V39Q42 42 39 42H24Z" fill="#fff" stroke="#55555b" stroke-width="2"/><path d="M3 0H16Q19 0 20 4L27 36L22 43L20 36H3Q0 36 0 33V3Q0 0 3 0Z" fill="#434248"/><path d="M17 12A8 8 0 1 0 18 19H11" fill="none" stroke="#fff" stroke-width="3.500"/><path d="M24 19H39M31 15V19M26 21Q30 31 38 34M37 20Q34 30 25 34" fill="none" stroke="#55555b" stroke-width="2.500"/></svg>
  <a class="blue" href="#translate">תרגום לעברית</a>
  <button aria-label="Close"><svg width="28" height="28" fill="none" stroke="#4d4d51" stroke-width="3"><path d="M2 2L26 26M26 2L2 26"/></svg></button>
</div>
<div class="banner">
  <svg width="194" height="100" viewBox="0 0 194 100" aria-hidden="true" fill="#fff"><path d="M0 75L24 18Q34 6 50 12Q80 36 140 74L171 23L105 48L32 74Q60 58 90 40L176 2Q196-4 194 16L160 90Q150 104 134 97L40 26Z"/></svg>
  <div class="brand"><span>APEX<br>TRADER<br>FUNDING</span><sup>TM</sup></div>
</div>
<div class="body">
  <p>Hi,</p>
  <p>Your requested PA Payout for $500.00 has been approved on Jul 14<br>2025.<br>Click <a href="#certificate">here</a> to download your certificate and congrats on being a<br>consistent trader!</p>
  <p>Special Invitation to enter the drawing for your chance to win up to<br>$9,000!<br>You’re invited to take advantage of a special contest and drawing<br>being held EXCLUSIVELY for our traders who have received a PA<br>Payout!</p>
  <ul>
    <li>• Winning participants will receive up to $9k in the drawing.</li>
    <li>• Simply share a quick testimonial regarding receiving a payout!</li>
    <li>• THREE different ways to enter the drawing and you CAN enter all<br>THREE!</li>
    <li>• We'll show you how to get double entries into each!</li>
  </ul>
</div>
<div class="scroll"></div>`);

define('live-overlay', `
<style>
:host { display: block; position: absolute; inset: auto 0 0; height: 240px; }
input { all: unset; position: absolute; left: 37px; bottom: 53px; width: 400px; height: 44px; font: 500 36px/44px Inter, sans-serif; color: #fff; }
input::placeholder { color: rgba(255,255,255,.42); opacity: 1; }
svg { position: absolute; }
.small { left: 344px; bottom: 178px; }
.big { left: 84px; bottom: 36px; }
.share { position: absolute; left: 272px; bottom: 1413px; width: 96px; height: 96px; border: 0; border-radius: 50%; padding: 0; background: #48474b; display: grid; place-items: center; }
.share svg { position: static; }
</style>
<button class="share" aria-label="Forward"><svg width="46" height="40" viewBox="0 0 46 40" fill="#dddce0"><path d="M24 2Q23 0 26 1L45 18Q47 20 45 22L26 39Q23 40 23 37V28Q10 26 3 37Q0 40 0 35Q2 13 23 11Z"/></svg></button>
<input aria-label="Comment" placeholder="Say something...">
<svg class="small" width="52" height="50" viewBox="0 0 52 50" aria-hidden="true"><defs><linearGradient id="o" x1="0" y1="0" x2="0" y2="1"><stop offset=".45" stop-color="#ff2400"/><stop offset="1" stop-color="#ffa400"/></linearGradient></defs><path transform="rotate(12 25 25)" d="M25 47C17 38 1 30 1 14C1 0 19-2 25 9C31-2 49 0 49 14C49 30 33 38 25 47Z" fill="url(#o)"/></svg>
<svg class="big" width="74" height="68" viewBox="0 0 74 68" aria-hidden="true"><defs><linearGradient id="p" x1="0" y1="0" x2="0" y2="1"><stop offset="0" stop-color="#ff2038"/><stop offset="1" stop-color="#ff1fd0"/></linearGradient></defs><path d="M34 68C24 56 0 43 0 22C0 2 28-8 38 10C48-4 74 2 74 24C74 44 48 56 34 68Z" fill="url(#p)"/></svg>`);
</script>
</body>
</html>
